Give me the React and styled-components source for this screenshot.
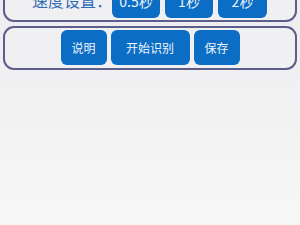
import * as React from 'react';
import styled, { createGlobalStyle } from 'styled-components';

const GlobalStyle = createGlobalStyle`
  html, body {
    margin: 0;
    padding: 0;
  }
  body {
    min-height: 225px;
    background: linear-gradient(to bottom, #ededf0 0%, #f3f3f4 60%, #f7f7f7 100%);
    font-family: "Noto Sans CJK SC", "Noto Sans", sans-serif;
    overflow: hidden;
  }
`;

const Page = styled.div`
  margin: -21px 3px 0 3px;
  display: flex;
  flex-direction: column;
  gap: 4px;
`;

const Panel = styled.div`
  border: 2px solid #5d5d8c;
  border-radius: 11px;
  background: #f0f0f3;
  display: flex;
  align-items: center;
  justify-content: ${p => (p.$center ? 'center' : 'flex-start')};
  gap: ${p => p.$gap || 4}px;
  padding: ${p => p.$pad};
`;

const Label = styled.span`
  font-size: 16px;
  color: #2f6cb3;
  line-height: 35px;
  width: 80px;
  margin-right: -5px;
  white-space: nowrap;
`;

const Button = styled.button`
  height: 35px;
  width: ${p => p.$w}px;
  border: none;
  border-radius: 6px;
  background: #0b6dc4;
  color: #eef4fb;
  font-family: "Noto Sans CJK SC", "Noto Sans", sans-serif;
  font-size: ${p => p.$fs || 12}px;
  padding: 0;
  display: flex;
  align-items: center;
  justify-content: center;
`;

export default function App() {
  return (
    <>
      <GlobalStyle />
      <Page>
        <Panel $pad="2px 2px 2px 27px" $gap={5}>
          <Label>速度设置：</Label>
          <Button $w={48} $fs={14}>0.5秒</Button>
          <Button $w={48} $fs={14}>1秒</Button>
          <Button $w={49} $fs={14}>2秒</Button>
        </Panel>
        <Panel $center $pad="2px 2px 3px 2px">
          <Button $w={46}>说明</Button>
          <Button $w={79}>开始识别</Button>
          <Button $w={46}>保存</Button>
        </Panel>
      </Page>
    </>
  );
}
